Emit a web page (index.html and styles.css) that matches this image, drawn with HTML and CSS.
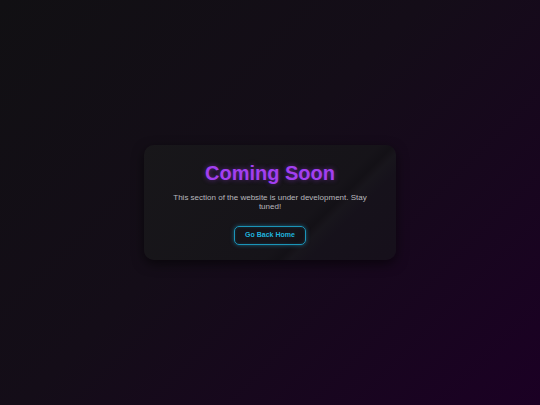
FILE: index.html
```html
<!DOCTYPE html>
<html lang="en">
<head>
<meta charset="utf-8">
<title>Coming Soon</title>
<link rel="stylesheet" href="styles.css">
</head>
<body>
<main class="page">
  <section class="card">
    <h1 class="title">Coming Soon</h1>
    <p class="text">This section of the website is under development. Stay tuned!</p>
    <a class="btn" href="#">Go Back Home</a>
  </section>
</main>
</body>
</html>
```

FILE: styles.css
```css
html, body {
  margin: 0;
  padding: 0;
  height: 100%;
}
body {
  font-family: "Liberation Sans", Arial, sans-serif;
  background: linear-gradient(135deg, #111013 0%, #140d18 45%, #1b0024 100%);
}
.page {
  min-height: 100vh;
  display: flex;
  align-items: center;
  justify-content: center;
}
.card {
  box-sizing: border-box;
  width: 252px;
  padding: 17px 24px 15px;
  border-radius: 10px;
  background: linear-gradient(135deg, rgba(24,23,26,0.96) 0%, rgba(22,20,25,0.96) 64%, rgba(19,17,22,0.96) 68%, rgba(24,22,28,0.96) 71%, rgba(22,18,27,0.96) 76%, rgba(22,16,27,0.96) 100%);
  box-shadow: 0 4px 12px rgba(0,0,0,0.55);
  text-align: center;
}
.title {
  margin: 0 0 8px;
  font-size: 20px;
  font-weight: bold;
  line-height: 23px;
  color: #a23ff0;
  text-shadow: 0 0 5px rgba(160,60,240,0.5);
}
.text {
  margin: 0 0 12px;
  font-size: 8px;
  line-height: 9.2px;
  color: #b8b8bd;
}
.btn {
  display: inline-block;
  padding: 4.5px 10px;
  font-size: 7px;
  line-height: 8px;
  font-weight: bold;
  color: #1fb2dc;
  text-decoration: none;
  border: 1px solid #1b94b8;
  border-radius: 5px;
  box-shadow: 0 0 4px rgba(30,170,220,0.5), inset 0 0 3px rgba(30,170,220,0.2);
}
```
